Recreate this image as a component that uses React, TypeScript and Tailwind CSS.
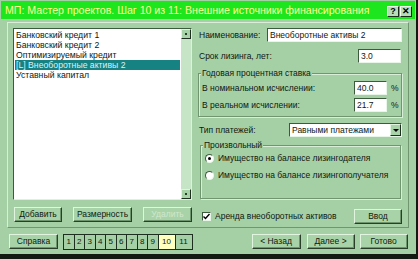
import React from "react";

const F = { fontFamily: '"Liberation Sans", Arial, sans-serif' };

function Btn({ children, className = "", disabled = false }: { children: React.ReactNode; className?: string; disabled?: boolean }) {
  return (
    <div
      className={
        "flex items-center justify-center h-[15px] bg-[#a8d3a8] border border-t-[#e0f4e0] border-l-[#e0f4e0] border-r-[#2a3f2a] border-b-[#2a3f2a] shadow-[inset_-1px_-1px_0_#6e946e] text-[8.5px] leading-none whitespace-nowrap " +
        (disabled ? "text-[#cfe8cf] " : "text-[#102010] ") +
        className
      }
    >
      {children}
    </div>
  );
}

function Field({ value, className = "" }: { value: string; className?: string }) {
  return (
    <div
      className={
        "h-[14px] bg-white border border-t-[#3c5a3c] border-l-[#3c5a3c] border-r-[#e8f6e8] border-b-[#e8f6e8] flex items-center px-[2px] text-[8.5px] leading-none text-[#101810] whitespace-nowrap " +
        className
      }
    >
      {value}
    </div>
  );
}

function Radio({ checked }: { checked?: boolean }) {
  return (
    <div className="w-[9px] h-[9px] shrink-0 rounded-full bg-white border border-t-[#3c5a3c] border-l-[#3c5a3c] border-r-[#e8f6e8] border-b-[#e8f6e8] flex items-center justify-center">
      {checked && <div className="w-[3px] h-[3px] rounded-full bg-black" />}
    </div>
  );
}

export default function App() {
  const items = [
    "Банковский кредит 1",
    "Банковский кредит 2",
    "Оптимизируемый кредит",
    "[L] Внеоборотные активы 2",
    "Уставный капитал",
  ];
  const pages = ["1", "2", "3", "4", "5", "6", "7", "8", "9", "10", "11"];
  return (
    <div style={F} className="w-[418px] h-[259px] bg-[#121a12] overflow-hidden">
      <div className="w-[416px] h-[254px] bg-[#a5cfa5] flex flex-col">
        {/* title */}
        <div className="h-[18px] mx-[1px] mt-[1px] bg-[#1ee61e] flex items-center pl-[4px] pr-[3px]">
          <div className="text-[10.6px] text-[#ffff90] leading-none whitespace-nowrap flex-1">
            МП: Мастер проектов. Шаг 10 из 11: Внешние источники финансирования
          </div>
          <div className="flex gap-[1px] mt-[2px]">
            <div className="w-[12px] h-[11px] bg-[#b8dcb8] border border-t-[#f0fff0] border-l-[#f0fff0] border-r-[#1a2a1a] border-b-[#1a2a1a] text-[9px] font-bold leading-none flex items-center justify-center text-black">?</div>
            <div className="w-[12px] h-[11px] bg-[#b8dcb8] border border-t-[#f0fff0] border-l-[#f0fff0] border-r-[#1a2a1a] border-b-[#1a2a1a] text-[9px] font-bold leading-none flex items-center justify-center text-black">✕</div>
          </div>
        </div>

        {/* panel */}
        <div className="mx-[7px] mt-[3px] h-[206px] border border-t-[#d8eed8] border-l-[#d8eed8] border-r-[#6f966f] border-b-[#6f966f] flex pl-[5px] pt-[5px] pr-[4px]">
          {/* left column */}
          <div className="w-[179px] flex flex-col">
            <div className="h-[172px] bg-white border border-t-[#3c5a3c] border-l-[#3c5a3c] border-r-[#e0f0e0] border-b-[#e0f0e0] flex">
              <div className="flex-1 pt-[1px] pl-[1px] pr-[1px]">
                {items.map((t, i) => (
                  <div
                    key={t}
                    className={
                      "h-[10px] text-[8.7px] leading-[10px] pl-[1px] whitespace-nowrap " +
                      (i === 3 ? "bg-[#178282] text-[#d8f2ff]" : "text-[#101810]")
                    }
                  >
                    {t}
                  </div>
                ))}
              </div>
              <div className="w-[10px] bg-[#c6e4c6] flex flex-col justify-between">
                <div className="h-[10px] bg-[#a8d3a8] border border-t-[#e0f4e0] border-l-[#e0f4e0] border-r-[#1f2f1f] border-b-[#1f2f1f] flex items-center justify-center">
                  <div className="w-[2px] h-[2px] bg-[#2a3f2a]" />
                </div>
                <div className="h-[10px] bg-[#a8d3a8] border border-t-[#e0f4e0] border-l-[#e0f4e0] border-r-[#1f2f1f] border-b-[#1f2f1f] flex items-center justify-center">
                  <div className="w-[2px] h-[2px] bg-[#2a3f2a]" />
                </div>
              </div>
            </div>
            <div className="flex mt-[7px]">
              <Btn className="w-[48px] ml-[1px]">Добавить</Btn>
              <Btn className="w-[59px] ml-[11px]">Размерность</Btn>
              <Btn className="w-[49px] ml-[11px]" disabled>Удалить</Btn>
            </div>
          </div>

          {/* right column */}
          <div className="flex-1 ml-[6px] flex flex-col text-[8.5px] text-[#101810] leading-none whitespace-nowrap">
            <div className="flex items-center h-[14px]">
              <div className="w-[69px] pl-[1px]">Наименование:</div>
              <Field value="Внеоборотные активы 2" className="w-[135px]" />
            </div>
            <div className="flex items-center h-[14px] mt-[7px]">
              <div className="flex-1 pl-[1px]">Срок лизинга, лет:</div>
              <Field value="3.0" className="w-[43px] mr-[3px]" />
            </div>
            {/* group 1 */}
            <div className="relative mt-[10px] h-[44px] border border-[#6f966f] shadow-[inset_1px_1px_0_#d8eed8,1px_1px_0_#d8eed8] mr-[2px]">
              <div className="absolute -top-[5px] left-[2px] bg-[#a5cfa5] px-[1px]">Годовая процентная ставка</div>
              <div className="flex items-center h-[12px] mt-[8px]">
                <div className="flex-1 pl-[3px]">В номинальном исчислении:</div>
                <Field value="40.0" className="w-[33px] h-[13px]" />
                <div className="w-[14px] pl-[4px]">%</div>
              </div>
              <div className="flex items-center h-[12px] mt-[5px]">
                <div className="flex-1 pl-[3px]">В реальном исчислении:</div>
                <Field value="21.7" className="w-[33px] h-[13px]" />
                <div className="w-[14px] pl-[4px]">%</div>
              </div>
            </div>
            <div className="flex items-center h-[14px] mt-[6px]">
              <div className="w-[91px] pl-[1px]">Тип платежей:</div>
              <div className="w-[113px] h-[14px] bg-white border border-t-[#3c5a3c] border-l-[#3c5a3c] border-r-[#e8f6e8] border-b-[#e8f6e8] flex items-center">
                <div className="flex-1 pl-[2px]">Равными платежами</div>
                <div className="w-[11px] h-[12px] bg-[#a8d3a8] border border-t-[#e0f4e0] border-l-[#e0f4e0] border-r-[#1f2f1f] border-b-[#1f2f1f] flex items-center justify-center">
                  <div className="w-0 h-0 border-l-[3px] border-r-[3px] border-t-[3px] border-l-transparent border-r-transparent border-t-black" />
                </div>
              </div>
            </div>
            {/* group 2 */}
            <div className="relative mt-[8px] h-[54px] border border-[#6f966f] shadow-[inset_1px_1px_0_#d8eed8,1px_1px_0_#d8eed8] ml-[2px] mr-[3px]">
              <div className="absolute -top-[5px] left-[2px] bg-[#a5cfa5] px-[1px]">Произвольный</div>
              <div className="flex items-center gap-[4px] mt-[8px] pl-[4px]">
                <Radio checked />
                <div>Имущество на балансе лизингодателя</div>
              </div>
              <div className="flex items-center gap-[4px] mt-[8px] pl-[4px]">
                <Radio />
                <div>Имущество на балансе лизингополучателя</div>
              </div>
            </div>
            <div className="flex items-center mt-[10px] h-[15px]">
              <div className="w-[9px] h-[9px] ml-[4px] bg-white border border-t-[#3c5a3c] border-l-[#3c5a3c] border-r-[#e8f6e8] border-b-[#e8f6e8] flex items-center justify-center">
                <svg width="7" height="7" viewBox="0 0 7 7"><path d="M0.5 3.5 L2.5 5.5 L6.5 1" stroke="black" strokeWidth="1.4" fill="none" /></svg>
              </div>
              <div className="flex-1 pl-[4px]">Аренда внеоборотных активов</div>
              <Btn className="w-[48px] mr-[2px]">Ввод</Btn>
            </div>
          </div>
        </div>

        {/* bottom row */}
        <div className="flex items-center mt-[6px] pl-[9px] h-[15px]">
          <Btn className="w-[49px] h-[15px]">Справка</Btn>
          <div className="ml-[5px] flex h-[16px] border border-[#1f2f1f] bg-[#a5cfa5]">
            {pages.map((p) => (
              <div
                key={p}
                className={
                  "h-full flex items-center justify-center text-[8px] leading-none text-[#101810] border-r border-[#1f2f1f] last:border-r-0 " +
                  (p === "10" ? "w-[17px] bg-[#ffffc0]" : p === "11" ? "w-[16px]" : "w-[10.5px]")
                }
              >
                {p}
              </div>
            ))}
          </div>
          <Btn className="w-[49px] ml-[59px]">&lt; Назад</Btn>
          <Btn className="w-[48px] ml-[6px]">Далее &gt;</Btn>
          <Btn className="w-[48px] ml-[5px]">Готово</Btn>
        </div>
      </div>
    </div>
  );
}
